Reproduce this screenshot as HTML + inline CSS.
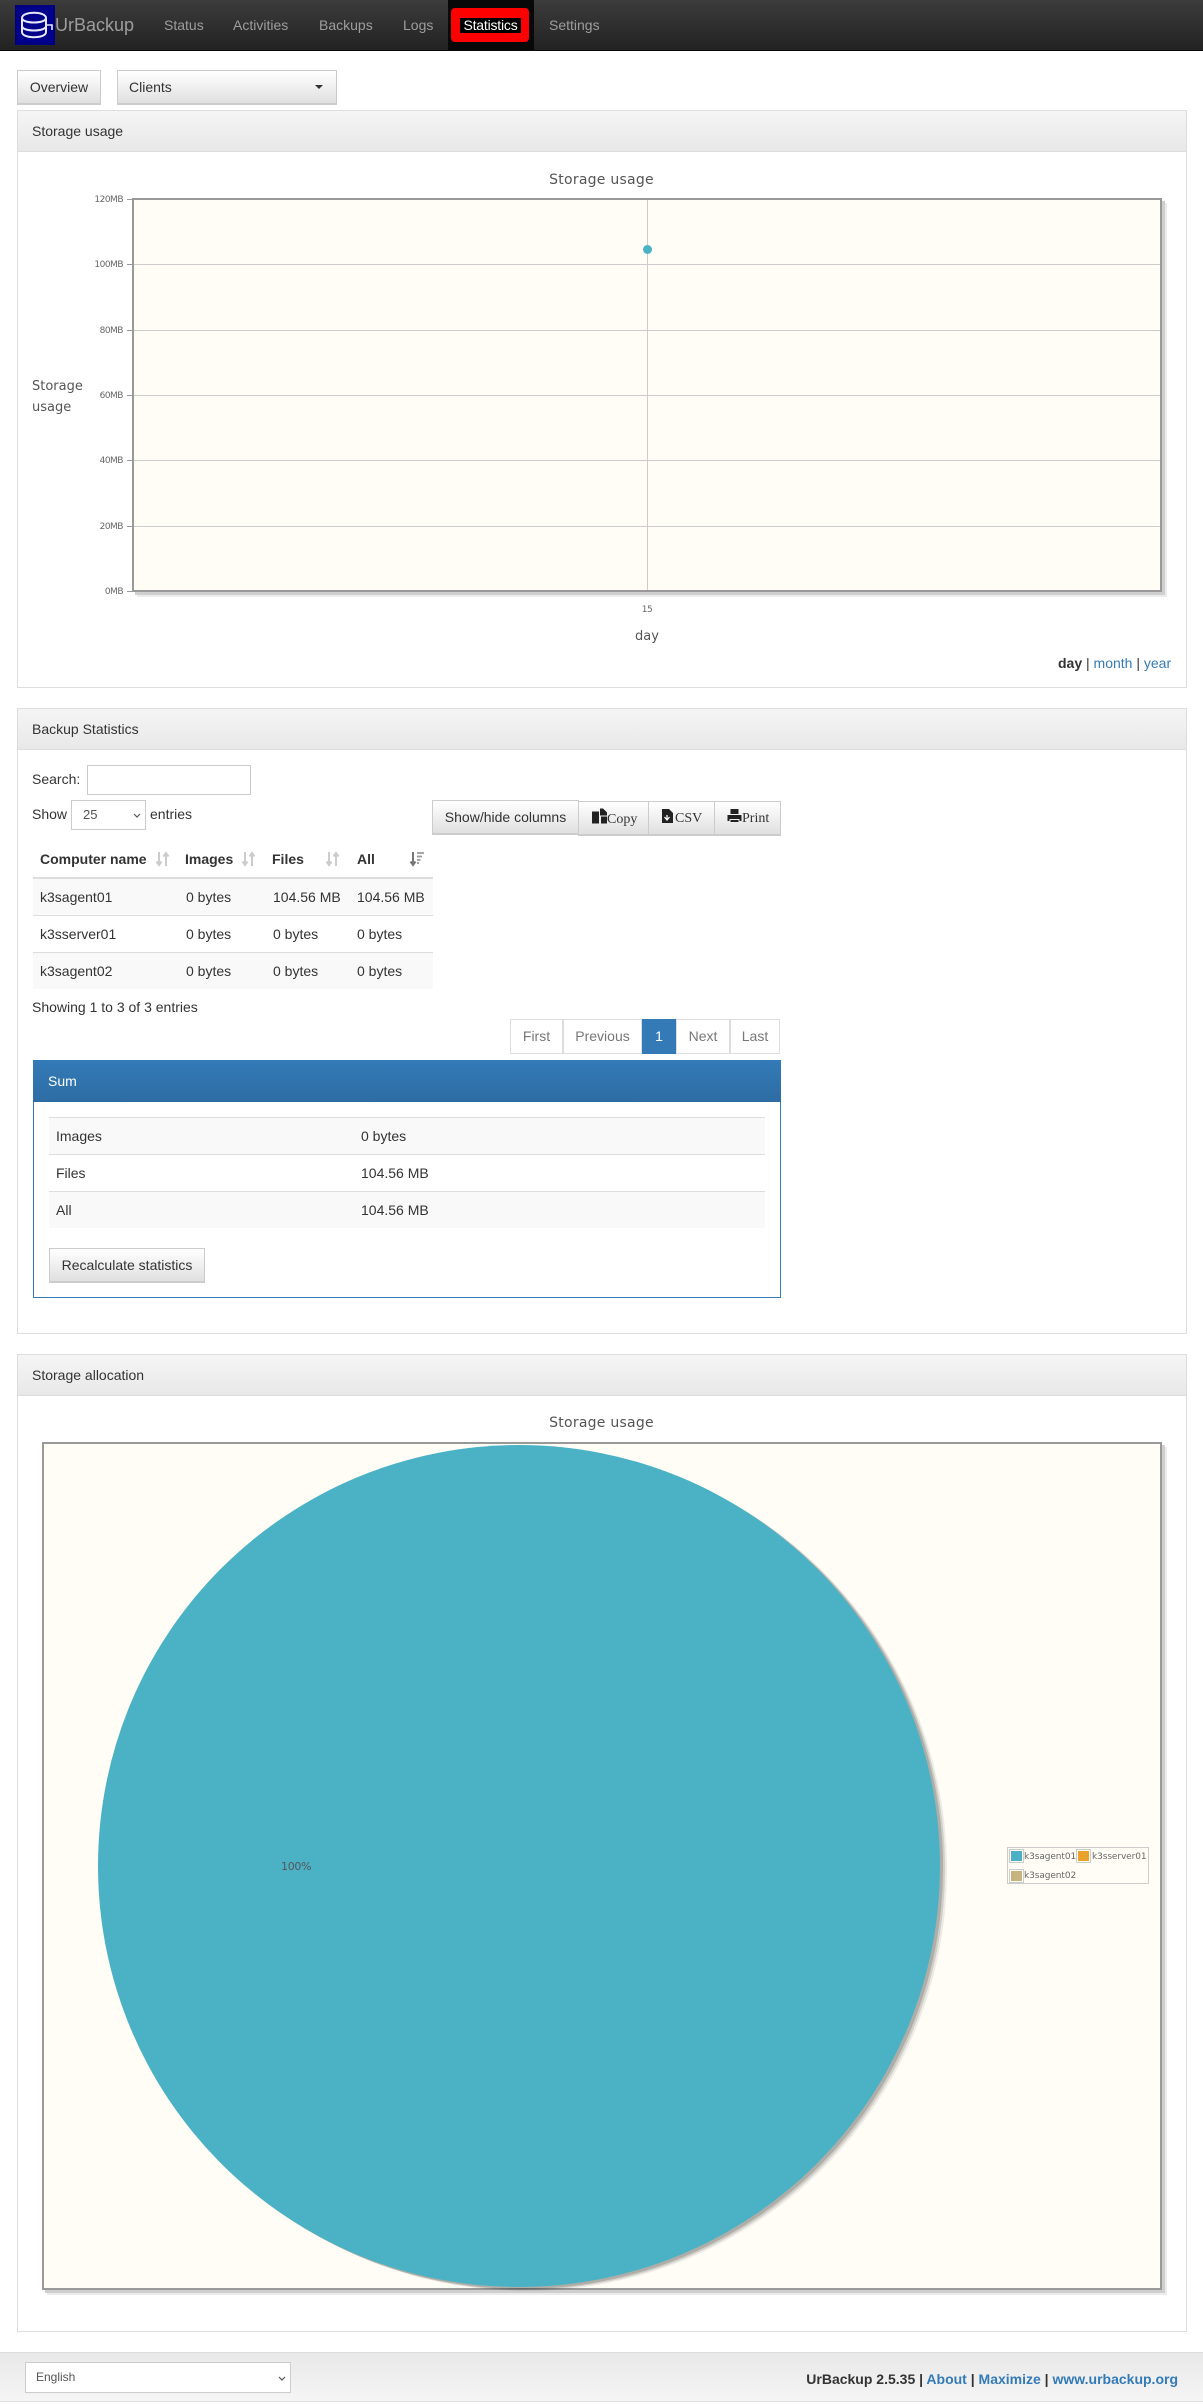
<!DOCTYPE html>
<html><head><meta charset="utf-8"><title>UrBackup</title>
<style>
*{box-sizing:border-box}
html,body{margin:0;padding:0;background:#fff}
body{width:1203px;height:2408px;position:relative;overflow:hidden;font:14px/20px "Liberation Sans",sans-serif;color:#333}
.a{position:absolute;white-space:nowrap}
a{color:#337ab7;text-decoration:none}
.nav{left:0;top:0;width:1203px;height:51px;background:linear-gradient(#3c3c3c,#222);border-bottom:1px solid #080808}
.nl{color:#9d9d9d;top:15px}
.btn{border:1px solid #ccc;border-bottom:2px solid #ccc;background:linear-gradient(#fff,#e0e0e0);text-align:center;color:#333}
.panel{left:17px;width:1170px;border:1px solid #ddd;background:#fff}
.ph{left:0;top:0;width:1168px;height:41px;background:linear-gradient(#f5f5f5,#e8e8e8);border-bottom:1px solid #ddd;padding:10px 14px;color:#333}
.plot{background:#fffdf6;border:2px solid #999;box-shadow:3px 3px 0 #cfcfcf,5px 5px 0 #ececec}
.gl{background:#ccc;height:1px}
.tk{background:#999;height:1px;width:5px}
.yl{font:9px/12px "DejaVu Sans",sans-serif;color:#666;text-align:right;width:40px;letter-spacing:-.5px}
.ct{font:14px/18px "DejaVu Sans",sans-serif;color:#555}
.r{left:33px;width:400px}
.rr{background:#f9f9f9}
.ln{background:#ddd;height:1px}
.sel{border:1px solid #ccc;background:#fff;color:#555}
.pg{top:1019px;height:35px;border:1px solid #ddd;background:#fff;color:#777;text-align:center;line-height:32px;margin-left:-1px}
.dt{font:14px/18px "Liberation Serif",serif;color:#333}
</style></head><body>

<div class="a nav"></div>
<svg class="a" style="left:15px;top:5px" width="40" height="40" viewBox="0 0 40 40">
<rect width="40" height="40" fill="#00007e"/><rect x="2" y="2" width="36" height="36" fill="#00008b"/>
<path d="M7 13c0-7 24-7 24 0v14c0 7-24 7-24 0zM7 13c0 6 24 6 24 0M7 21c0 6 24 6 24 0" fill="none" stroke="#e8e8f8" stroke-width="2"/>
<path d="M31 20h6v5" fill="none" stroke="#e8e8f8" stroke-width="1.6"/>
</svg>
<div class="a" style="left:55px;top:15px;font-size:18px;color:#9d9d9d">UrBackup</div>
<div class="a nl" style="left:164px">Status</div>
<div class="a nl" style="left:233px">Activities</div>
<div class="a nl" style="left:319px">Backups</div>
<div class="a nl" style="left:403px">Logs</div>
<div class="a" style="left:448px;top:0;width:86px;height:50px;background:#080808"></div>
<div class="a" style="left:451px;top:8px;width:78px;height:34px;background:#f00;border-radius:4px"></div>
<div class="a" style="left:460px;top:18px;width:61px;height:15px;background:#000;color:#fff;line-height:15px;text-align:center;letter-spacing:-.2px">Statistics</div>
<div class="a nl" style="left:549px">Settings</div>

<div class="a btn" style="left:17px;top:70px;width:84px;height:35px;line-height:32px">Overview</div>
<div class="a btn" style="left:117px;top:70px;width:220px;height:35px;line-height:32px;text-align:left;padding-left:11px">Clients
<span class="a" style="left:197px;top:14px;border:4px solid transparent;border-top-color:#333;border-bottom:0"></span></div>

<!-- Panel 1 -->
<div class="a panel" style="top:110px;height:578px"><div class="a ph">Storage usage</div></div>
<div class="a ct" style="left:0;width:1203px;top:171px;text-align:center;letter-spacing:.25px;transform:translateX(0px)">Storage usage</div>
<div class="a" style="left:132px;top:198px;width:1030px;height:394px;background:#fffdf6;box-shadow:3px 3px 0 #cfcfcf,5px 5px 0 #ececec"></div>
<div class="a gl" style="left:132px;width:1030px;top:264px"></div>
<div class="a gl" style="left:132px;width:1030px;top:330px"></div>
<div class="a gl" style="left:132px;width:1030px;top:395px"></div>
<div class="a gl" style="left:132px;width:1030px;top:460px"></div>
<div class="a gl" style="left:132px;width:1030px;top:526px"></div>
<div class="a" style="left:647px;top:199px;width:1px;height:392px;background:#ccc"></div>
<div class="a" style="left:132px;top:198px;width:1030px;height:394px;border:2px solid #999"></div>
<div class="a" style="left:643px;top:245px;width:9px;height:9px;border-radius:50%;background:#4bb2c5"></div>
<div class="a tk" style="left:127px;top:199px"></div><div class="a yl" style="left:83px;top:194px">120MB</div>
<div class="a tk" style="left:127px;top:264px"></div><div class="a yl" style="left:83px;top:259px">100MB</div>
<div class="a tk" style="left:127px;top:330px"></div><div class="a yl" style="left:83px;top:325px">80MB</div>
<div class="a tk" style="left:127px;top:395px"></div><div class="a yl" style="left:83px;top:390px">60MB</div>
<div class="a tk" style="left:127px;top:460px"></div><div class="a yl" style="left:83px;top:455px">40MB</div>
<div class="a tk" style="left:127px;top:526px"></div><div class="a yl" style="left:83px;top:521px">20MB</div>
<div class="a tk" style="left:127px;top:591px"></div><div class="a yl" style="left:83px;top:586px">0MB</div>
<div class="a ct" style="left:32px;top:376px;line-height:21px;font-size:13px">Storage<br>usage</div>
<div class="a yl" style="left:627px;top:604px;text-align:center">15</div>
<div class="a ct" style="left:627px;width:40px;top:628px;text-align:center;font-size:13px">day</div>
<div class="a" style="left:1058px;top:653px"><b>day</b> | <a>month</a> | <a>year</a></div>

<!-- Panel 2 -->
<div class="a panel" style="top:708px;height:626px"><div class="a ph">Backup Statistics</div></div>
<div class="a" style="left:32px;top:769px">Search:</div>
<div class="a sel" style="left:87px;top:765px;width:164px;height:30px"></div>
<div class="a" style="left:32px;top:804px">Show</div>
<div class="a sel" style="left:71px;top:800px;width:75px;height:30px;font-size:13px;padding:4px 11px">25
<svg class="a" style="left:61px;top:12px" width="8" height="6"><path d="M1 1l3 3 3-3" fill="none" stroke="#555" stroke-width="1.2"/></svg></div>
<div class="a" style="left:150px;top:804px">entries</div>
<div class="a btn" style="left:432px;top:800px;width:147px;height:35px;line-height:32px">Show/hide columns</div>
<div class="a btn dt" style="left:578px;top:801px;width:71px;height:35px;padding-left:13px;line-height:36px;text-align:left"><svg width="16" height="17" style="vertical-align:-2px;margin-right:-1px" viewBox="0 0 16 16"><path d="M0 3h7v12H0zM8 0h3l4 4v3H8zM9 8h6v7H9z" fill="#222"/></svg>Copy</div>
<div class="a btn dt" style="left:648px;top:801px;width:67px;height:35px;padding-left:12px;line-height:34px;text-align:left"><svg width="13" height="16" style="vertical-align:-2px;margin-right:1px" viewBox="0 0 13 16"><path d="M1 1h7l4 4v10H1z" fill="#222"/><path d="M6 7v4M3.500 9l2.500 3 2.500-3" fill="none" stroke="#fff" stroke-width="1.300"/></svg>CSV</div>
<div class="a btn dt" style="left:714px;top:801px;width:67px;height:35px;padding-left:12px;line-height:34px;text-align:left"><svg width="15" height="16" style="vertical-align:-2px;margin-right:0" viewBox="0 0 14 16"><path d="M3 1h8v5H3zM0 7h14v6h-2v-2H2v2H0zM3 12h8v2H3z" fill="#222"/></svg>Print</div>

<div class="a" style="left:40px;top:849px;font-weight:bold">Computer name</div>
<div class="a" style="left:185px;top:849px;font-weight:bold">Images</div>
<div class="a" style="left:272px;top:849px;font-weight:bold">Files</div>
<div class="a" style="left:357px;top:849px;font-weight:bold">All</div>
<svg class="a" style="left:155px;top:851px" width="16" height="16"><path d="M4 1v12M1.500 10.500L4 14l2.500-3.500M11 15V3M8.500 5.500L11 2l2.500 3.500" fill="none" stroke="#ccc" stroke-width="2"/></svg>
<svg class="a" style="left:241px;top:851px" width="16" height="16"><path d="M4 1v12M1.500 10.500L4 14l2.500-3.500M11 15V3M8.500 5.500L11 2l2.500 3.500" fill="none" stroke="#ccc" stroke-width="2"/></svg>
<svg class="a" style="left:325px;top:851px" width="16" height="16"><path d="M4 1v12M1.500 10.500L4 14l2.500-3.500M11 15V3M8.500 5.500L11 2l2.500 3.500" fill="none" stroke="#ccc" stroke-width="2"/></svg>
<svg class="a" style="left:409px;top:851px" width="16" height="16"><path d="M4 1v12M1.500 10.500L4 14l2.500-3.500" fill="none" stroke="#777" stroke-width="2"/><path d="M8 2h7M8 5.500h5M8 9h3.500M8 12h2" stroke="#999" stroke-width="1.800"/></svg>
<div class="a" style="left:33px;top:877px;width:400px;height:2px;background:#ddd"></div>
<div class="a r rr" style="top:879px;height:36px"></div>
<div class="a ln r" style="top:915px"></div><div class="a ln r" style="top:952px"></div>
<div class="a r rr" style="top:953px;height:36px"></div>
<div class="a" style="left:40px;top:887px">k3sagent01</div><div class="a" style="left:186px;top:887px">0 bytes</div><div class="a" style="left:273px;top:887px">104.56 MB</div><div class="a" style="left:357px;top:887px">104.56 MB</div>
<div class="a" style="left:40px;top:924px">k3sserver01</div><div class="a" style="left:186px;top:924px">0 bytes</div><div class="a" style="left:273px;top:924px">0 bytes</div><div class="a" style="left:357px;top:924px">0 bytes</div>
<div class="a" style="left:40px;top:961px">k3sagent02</div><div class="a" style="left:186px;top:961px">0 bytes</div><div class="a" style="left:273px;top:961px">0 bytes</div><div class="a" style="left:357px;top:961px">0 bytes</div>
<div class="a" style="left:32px;top:997px">Showing 1 to 3 of 3 entries</div>

<div class="a pg" style="left:511px;width:53px">First</div>
<div class="a pg" style="left:564px;width:79px">Previous</div>
<div class="a pg" style="left:643px;width:34px;background:#337ab7;border-color:#337ab7;color:#fff">1</div>
<div class="a pg" style="left:677px;width:54px">Next</div>
<div class="a pg" style="left:731px;width:50px">Last</div>

<div class="a" style="left:33px;top:1060px;width:748px;height:238px;border:1px solid #337ab7;background:#fff"></div>
<div class="a" style="left:33px;top:1060px;width:748px;height:42px;background:linear-gradient(#337ab7,#2e6da4);color:#fff;padding:11px 15px;font-size:14px">Sum</div>
<div class="a" style="left:49px;top:1117px;width:716px;height:111px;background:#f9f9f9"></div>
<div class="a" style="left:49px;top:1154px;width:716px;height:37px;background:#fff"></div>
<div class="a ln" style="left:49px;top:1117px;width:716px"></div><div class="a ln" style="left:49px;top:1154px;width:716px"></div><div class="a ln" style="left:49px;top:1191px;width:716px"></div>
<div class="a" style="left:56px;top:1126px">Images</div><div class="a" style="left:361px;top:1126px">0 bytes</div>
<div class="a" style="left:56px;top:1163px">Files</div><div class="a" style="left:361px;top:1163px">104.56 MB</div>
<div class="a" style="left:56px;top:1200px">All</div><div class="a" style="left:361px;top:1200px">104.56 MB</div>
<div class="a btn" style="left:49px;top:1248px;width:156px;height:35px;line-height:32px">Recalculate statistics</div>

<!-- Panel 3 -->
<div class="a panel" style="top:1354px;height:978px"><div class="a ph">Storage allocation</div></div>
<div class="a ct" style="left:0;width:1203px;top:1414px;text-align:center;letter-spacing:.25px">Storage usage</div>
<div class="a plot" style="left:42px;top:1442px;width:1120px;height:848px"></div>
<svg class="a" style="left:90px;top:1440px" width="860" height="852">
<circle cx="436" cy="430" r="421" fill="#000" opacity=".07"/>
<circle cx="434" cy="429" r="421" fill="#000" opacity=".12"/>
<circle cx="432" cy="428" r="421" fill="#000" opacity=".16"/>
<circle cx="429" cy="426" r="421" fill="#4bb2c5"/>
</svg>
<div class="a" style="left:281px;top:1860px;font:11px/14px 'DejaVu Sans',sans-serif;color:#555;letter-spacing:-.3px">100%</div>
<div class="a" style="left:1007px;top:1847px;width:142px;height:37px;border:1px solid #ccc;background:#fffdf6"></div>
<div class="a" style="left:1009px;top:1849px;width:15px;height:14px;border:1px solid #ccc;padding:1px"><div style="background:#4bb2c5;width:100%;height:100%"></div></div>
<div class="a" style="left:1076px;top:1849px;width:15px;height:14px;border:1px solid #ccc;padding:1px"><div style="background:#eaa228;width:100%;height:100%"></div></div>
<div class="a" style="left:1009px;top:1869px;width:15px;height:14px;border:1px solid #ccc;padding:1px"><div style="background:#c5b47f;width:100%;height:100%"></div></div>
<div class="a" style="left:1024px;top:1851px;font:9px/12px 'DejaVu Sans',sans-serif;color:#666;letter-spacing:-.1px">k3sagent01</div>
<div class="a" style="left:1092px;top:1851px;font:9px/12px 'DejaVu Sans',sans-serif;color:#666;letter-spacing:-.1px">k3sserver01</div>
<div class="a" style="left:1024px;top:1870px;font:9px/12px 'DejaVu Sans',sans-serif;color:#666;letter-spacing:-.1px">k3sagent02</div>

<!-- Footer -->
<div class="a" style="left:0;top:2352px;width:1203px;height:50px;background:linear-gradient(#e8e8e8,#f5f5f5);border-top:1px solid #ddd;border-bottom:1px solid #ddd"></div>
<div class="a sel" style="left:25px;top:2362px;width:266px;height:31px;font-size:12px;padding:4px 10px">English
<svg class="a" style="left:252px;top:13px" width="8" height="6"><path d="M1 1l3 3 3-3" fill="none" stroke="#555" stroke-width="1.200"/></svg></div>
<div class="a" style="right:25px;top:2369px;font-weight:bold">UrBackup 2.5.35 | <a>About</a> | <a>Maximize</a> | <a>www.urbackup.org</a></div>
</body></html>
